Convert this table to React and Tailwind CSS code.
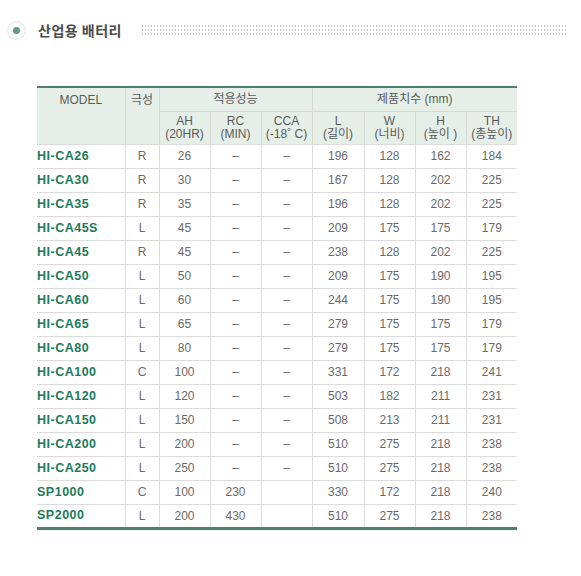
import React from "react";

const rows = [
  ["HI-CA26", "R", "26", "–", "–", "196", "128", "162", "184"],
  ["HI-CA30", "R", "30", "–", "–", "167", "128", "202", "225"],
  ["HI-CA35", "R", "35", "–", "–", "196", "128", "202", "225"],
  ["HI-CA45S", "L", "45", "–", "–", "209", "175", "175", "179"],
  ["HI-CA45", "R", "45", "–", "–", "238", "128", "202", "225"],
  ["HI-CA50", "L", "50", "–", "–", "209", "175", "190", "195"],
  ["HI-CA60", "L", "60", "–", "–", "244", "175", "190", "195"],
  ["HI-CA65", "L", "65", "–", "–", "279", "175", "175", "179"],
  ["HI-CA80", "L", "80", "–", "–", "279", "175", "175", "179"],
  ["HI-CA100", "C", "100", "–", "–", "331", "172", "218", "241"],
  ["HI-CA120", "L", "120", "–", "–", "503", "182", "211", "231"],
  ["HI-CA150", "L", "150", "–", "–", "508", "213", "211", "231"],
  ["HI-CA200", "L", "200", "–", "–", "510", "275", "218", "238"],
  ["HI-CA250", "L", "250", "–", "–", "510", "275", "218", "238"],
  ["SP1000", "C", "100", "230", "", "330", "172", "218", "240"],
  ["SP2000", "L", "200", "430", "", "510", "275", "218", "238"],
];

const font = {
  fontFamily: '"Liberation Sans", "Noto Sans CJK KR", sans-serif',
};

export default function App() {
  return (
    <div className="w-[581px] h-[576px] bg-white" style={font}>
      <div className="flex items-center pt-[22px] pl-[7px] h-[38px]">
        <div className="w-[19px] h-[19px] rounded-full bg-[radial-gradient(circle,#ffffff_45%,#e6ece8_100%)] border border-[#e6ebe8] flex items-center justify-center">
          <div className="w-[7px] h-[7px] rounded-full bg-[#5f9c84]" />
        </div>
        <div className="ml-[12px] text-[14px] font-bold text-[#4a4a4a] tracking-[0.5px] leading-none" style={{ fontFamily: '"Noto Sans CJK KR", sans-serif' }}>
          산업용 배터리
        </div>
        <div className="ml-[19px] w-[427px] h-[13px] bg-[radial-gradient(circle,#c4c4c4_0.7px,transparent_0.9px)] bg-[length:3px_4px]" />
      </div>
      <div className="pl-[37px] pt-[48px]">
        <table className="table-fixed border-collapse w-[480px] text-[12px] text-[#6a6a6a]">
          <colgroup>
            <col className="w-[88px]" />
            <col className="w-[34px]" />
            <col className="w-[51px]" />
            <col className="w-[51px]" />
            <col className="w-[51px]" />
            <col className="w-[52px]" />
            <col className="w-[51px]" />
            <col className="w-[51px]" />
            <col className="w-[51px]" />
          </colgroup>
          <thead className="bg-[#e6efe7] text-[#5a5a5a] text-[12px]">
            <tr className="h-[24px] border-t-2 border-[#4f7f6d]">
              <th rowSpan={2} className="font-normal align-top pt-[3px] border-r border-[#d3d9d4] text-center">MODEL</th>
              <th rowSpan={2} className="font-normal align-top pt-[3px] border-r border-[#d3d9d4]">극성</th>
              <th colSpan={3} className="font-normal border-r border-b border-[#d3d9d4]">적용성능</th>
              <th colSpan={4} className="font-normal border-b border-[#d3d9d4]">제품치수 (mm)</th>
            </tr>
            <tr className="h-[33px] leading-[13px]">
              <th className="font-normal border-r border-[#d3d9d4]">AH<br />(20HR)</th>
              <th className="font-normal border-r border-[#d3d9d4]">RC<br />(MIN)</th>
              <th className="font-normal border-r border-[#d3d9d4]">CCA<br />(-18˚ C)</th>
              <th className="font-normal border-r border-[#d3d9d4]">L<br />(길이)</th>
              <th className="font-normal border-r border-[#d3d9d4]">W<br />(너비)</th>
              <th className="font-normal border-r border-[#d3d9d4]">H<br />(높이 )</th>
              <th className="font-normal">TH<br />(총높이)</th>
            </tr>
          </thead>
          <tbody className="border-b-[3px] border-[#4f7f6d]">
            {rows.map((r, i) => (
              <tr key={i} className="border-t border-[#dcdcdc]">
                <td className="h-[24px] font-bold text-[#1b7a5b] text-[12.5px] tracking-[0.5px] text-left">{r[0]}</td>
                {r.slice(1).map((c, j) => (
                  <td key={j} className={"h-[24px] text-center " + (j < 7 ? "border-r border-[#dcdcdc]" : "")} style={{ borderLeft: j === 0 ? "1px solid #dcdcdc" : undefined }}>
                    {c}
                  </td>
                ))}
              </tr>
            ))}
          </tbody>
        </table>
      </div>
    </div>
  );
}
